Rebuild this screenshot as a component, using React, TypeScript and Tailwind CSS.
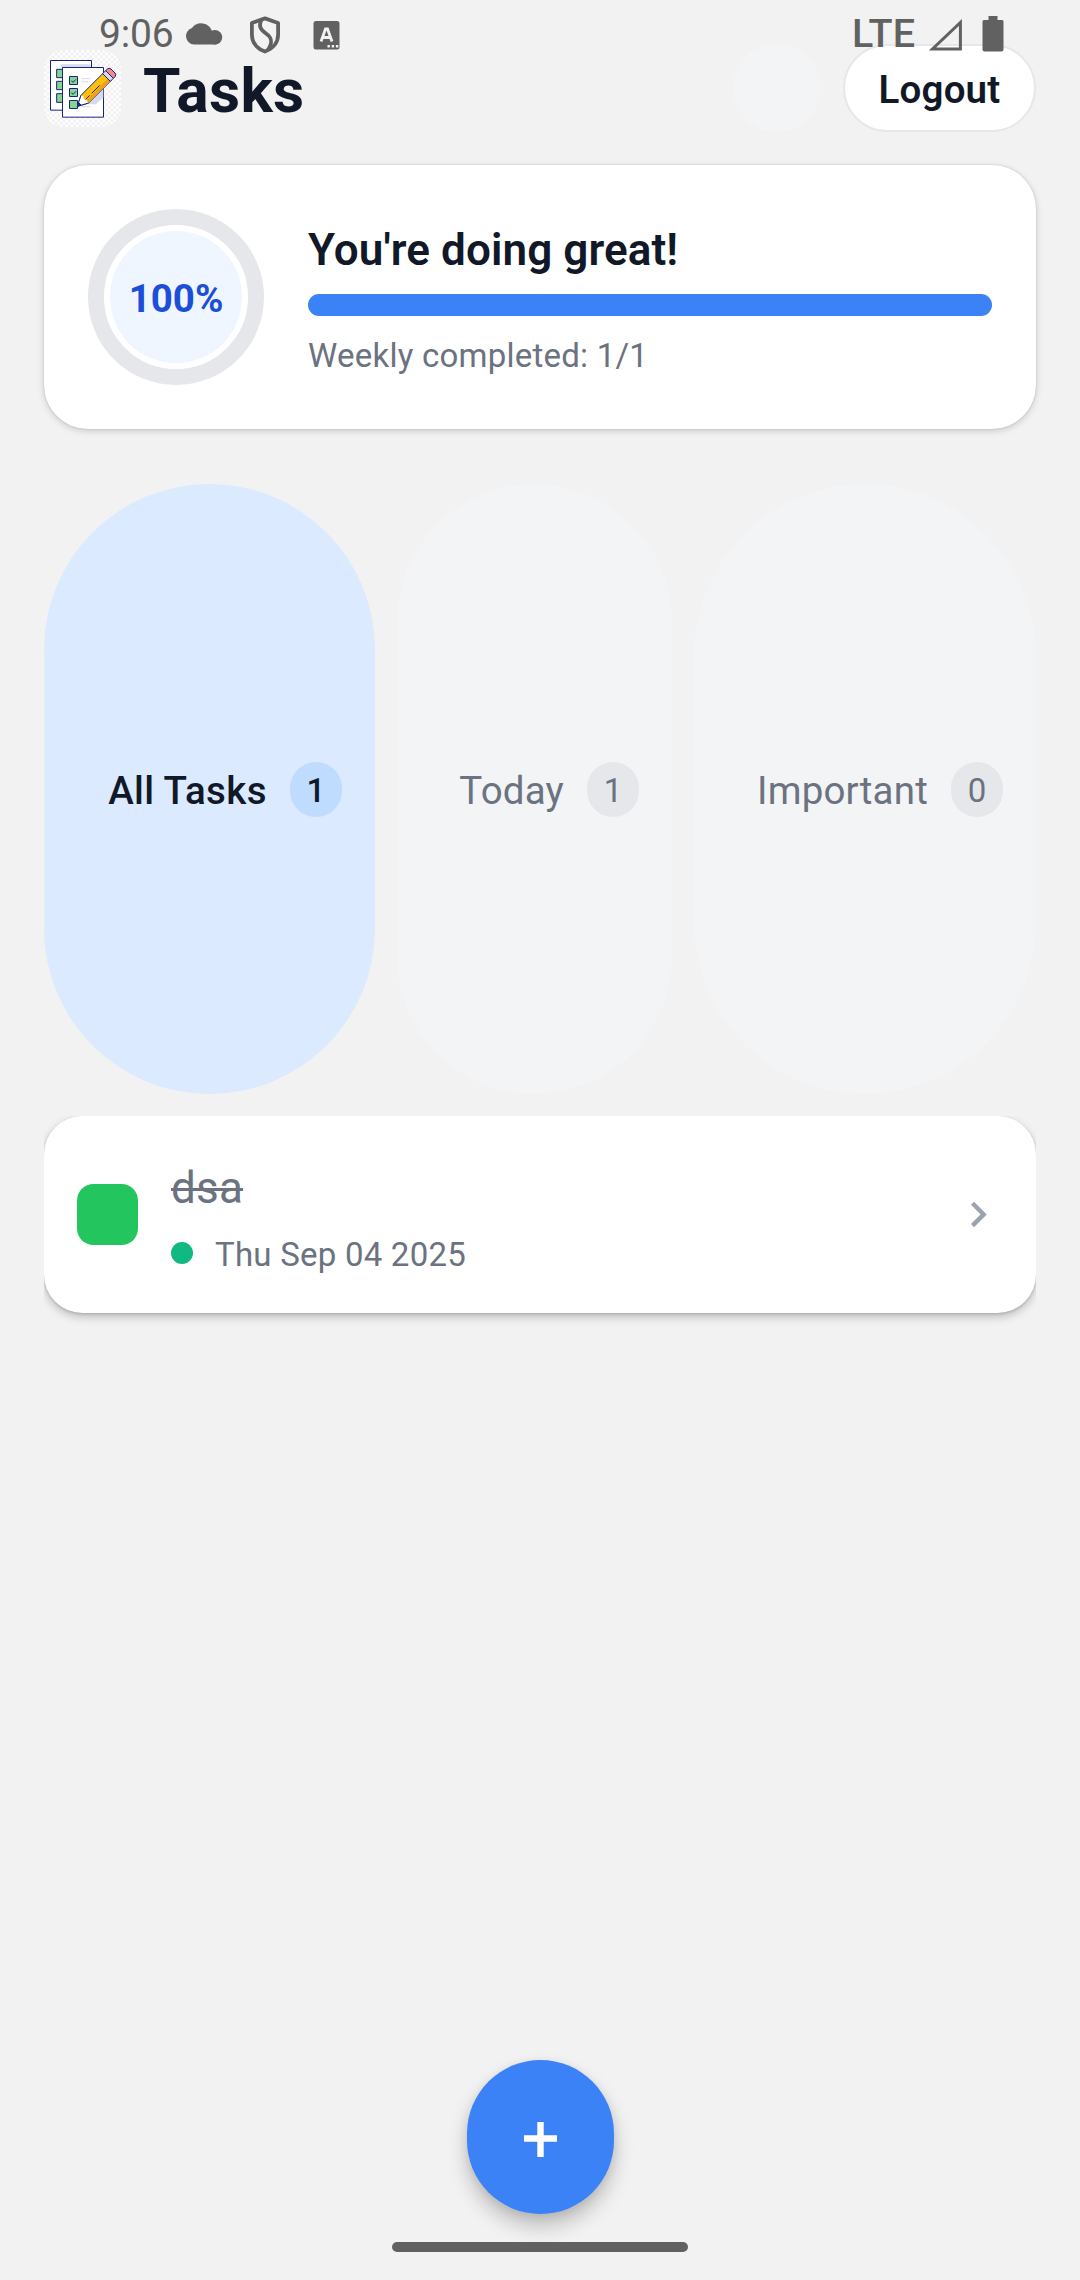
import React from "react";

function StatusBar() {
  return (
    <div className="absolute inset-x-0 top-0 z-20 flex h-[66px] items-center justify-between pr-[76px] pl-[99px] text-[#616161]">
      <div className="flex items-center">
        <span className="w-[86px] pt-[2px] text-[39px] leading-[46px] tracking-[-0.2px]">9:06</span>
        <svg className="mt-[1px] h-[22px] w-[38px]" viewBox="0 0 38 22" fill="currentColor">
          <path d="M9 21.5a8.5 8.5 0 0 1-2-16.6A11.5 11.5 0 0 1 27 8a6.8 6.8 0 0 1 4 13.5z" />
          <circle cx="30" cy="14.3" r="7.2" />
        </svg>
        <svg className="ml-[26px] mt-[4px] h-[38px] w-[32px]" viewBox="0 0 32 38" fill="none" stroke="currentColor" strokeWidth="3.8">
          <path d="M16 2.4 2.9 7v11.5c0 8 5 14.2 13.1 17 8.1-2.8 13.1-9 13.1-17V7z" strokeLinejoin="round" />
          <path d="M12.5 3.5C9.5 10 11 13.5 17 17.5 23 21.5 24 26 19 34" />
        </svg>
        <svg className="ml-[32px] mt-[4px] h-[29px] w-[27px]" viewBox="0 0 27 29">
          <rect width="26" height="28.5" x="0.5" rx="2.5" fill="currentColor" />
          <path d="M8 20.5 12.5 8h2L19 20.5M9.5 16.5h8" fill="none" stroke="#f2f2f2" strokeWidth="2.8" />
          <path d="M14.5 24h2.4v2.4h-2.4zm4.2 0h2.4v2.4h-2.4zm4.2 0h2.4v2.4h-2.4z" fill="#f2f2f2" />
        </svg>
      </div>
      <div className="flex items-center">
        <span className="mr-[13px] pt-[2px] text-[39.5px] font-medium leading-[46px]">LTE</span>
        <svg className="mt-[4px] h-[34px] w-[35px]" viewBox="0 0 35 34" fill="none" stroke="currentColor" strokeWidth="3">
          <path d="M32.4 4.5v26.5H4.5z" />
        </svg>
        <svg className="ml-[19px] mt-[2px] h-[36px] w-[22px]" viewBox="0 0 22 36" fill="currentColor">
          <path d="M6.5 0h9v4H20a1.5 1.5 0 0 1 1.5 1.5v28A2 2 0 0 1 19.5 35.5h-17a2 2 0 0 1-2-2v-28A1.5 1.5 0 0 1 2 4h4.5z" />
        </svg>
      </div>
    </div>
  );
}

function AppIcon() {
  return (
    <svg className="h-[77px] w-[77px] rounded-[20px]" viewBox="12 15 231 231">
      <defs>
        <pattern id="checker" width="16" height="16" x="12" y="15" patternUnits="userSpaceOnUse">
          <rect width="16" height="16" fill="#fff" />
          <path d="M8 0h8v8H8zM0 8h8v8H0z" fill="#f0f0f0" />
        </pattern>
      </defs>
      <rect x="12" y="15" width="231" height="231" fill="url(#checker)" />
      <g stroke="#1a237e" strokeWidth="3">
        <path d="M31.5 46.5h123v149h-123z" fill="#fff" />
        <path d="M62 58h90v10H62z" fill="#d5daee" stroke="none" />
        <path d="M50 73h18v25H50zM50 109h18v25H50zM50 146h18v26H50z" fill="#81d88b" />
        <path d="M67.5 67.5h123v149h-123z" fill="#fff" />
        <path d="M126 175l64-65v48l-24 20z" fill="#d5daee" stroke="none" />
        <path d="M124 101h27M124 110h20M140 176h30M125 185h26" stroke="#d5daee" />
        <path d="M88.5 94.5h24v24h-24zM88.5 130.5h24v24h-24zM88.5 166.5h24v24h-24z" fill="#81d88b" />
        <path d="M94 107l5 5 9-9M94 143l5 5 9-9" fill="none" />
        <path d="M112 184l11-33 68-68 23 23-68 68z" fill="#ffc107" />
        <path d="M137 167l69-69 8 8-68 68z" fill="#eba21c" stroke="none" />
        <path d="M112 184l11-33 7 3 1 9 8 2 7 9z" fill="#fff" stroke="none" />
        <path d="M123 151l-11 33 34-10" fill="none" />
        <path d="M112 184l4-11 7 7z" fill="#1a237e" />
        <path d="M137 163l12-12M155 145l24-24" fill="none" />
        <path d="M188 86l9-9 23 23-9 9z" fill="#d5daee" />
        <path d="M197 77l5-5q5-5 11 0l12 12q5 5 0 11l-5 5z" fill="#f48b83" />
      </g>
    </svg>
  );
}

function Header() {
  return (
    <header className="flex h-[88px] items-center">
      <AppIcon />
      <h1 className="ml-[22px] mt-[8px] text-[60.5px] font-bold leading-[72px] tracking-[0.3px] text-[#111827]">Tasks</h1>
      <div className="ml-auto size-[88px] rounded-full bg-[#f3f4f6]" />
      <button className="ml-[22px] flex h-[88px] w-[193px] items-center justify-center rounded-full border-[2.75px] border-[#e5e7eb] bg-white pt-[3px] text-[38.5px] font-semibold leading-[46px] tracking-[0.2px] text-[#111827]">
        Logout
      </button>
    </header>
  );
}

function ProgressCard() {
  return (
    <section className="mt-[33px] flex h-[264px] items-center rounded-[44px] bg-white px-[44px] shadow-[0_2px_7px_rgba(0,0,0,0.17),0_0_2px_rgba(0,0,0,0.16)]">
      <div className="flex size-[176px] shrink-0 items-center justify-center rounded-full border-[16.5px] border-[#e5e7eb]">
        <div className="flex size-[132px] shrink-0 items-center justify-center rounded-full bg-[#eff6ff] pt-[4px] text-[38.5px] font-bold text-[#1d4ed8]">
          100%
        </div>
      </div>
      <div className="ml-[44px] flex-1 pt-[5px]">
        <h2 className="text-[44px] font-semibold leading-[52px] tracking-[0.1px] text-[#111827]">You're doing great!</h2>
        <div className="mt-[18px] h-[22px] rounded-full bg-[#3b82f6]" />
        <p className="mt-[20px] text-[33px] leading-[39px] tracking-[0.23px] text-[#6b7280]">Weekly completed: 1/1</p>
      </div>
    </section>
  );
}

const tabs = [
  { label: "All Tasks", count: 1, active: true, width: "w-[331px]" },
  { label: "Today", count: 1, active: false, width: "w-[275px]" },
  { label: "Important", count: 0, active: false, width: "w-[342px]" },
];

function Tabs() {
  return (
    <nav className="mt-[55px] flex h-[610px] gap-[22px]">
      {tabs.map((t) => (
        <button
          key={t.label}
          className={`flex shrink-0 items-center justify-end rounded-full pr-[33px] text-[38.5px] ${t.width} ${
            t.active
              ? "bg-[#dbeafe] font-medium tracking-[0.4px] text-[#111827]"
              : "bg-[#f3f4f6] tracking-[0.2px] text-[#6b7280]"
          }`}
        >
          <span className="pt-[3px] leading-[46px]">{t.label}</span>
          <span
            className={`ml-[23px] flex h-[55px] w-[52px] items-center justify-center rounded-full pt-[3px] text-[33px] tracking-normal ${
              t.active ? "bg-[#bfdbfe]" : "bg-[#e5e7eb]"
            }`}
          >
            {t.count}
          </span>
        </button>
      ))}
    </nav>
  );
}

function TaskList() {
  return (
    <ul className="mt-[22px] overflow-hidden pb-[22px]">
      <li className="flex h-[197px] items-center rounded-[38.5px] bg-white px-[33px] shadow-[0_4px_10px_rgba(0,0,0,0.22),0_1px_3px_rgba(0,0,0,0.15)]">
        <div className="size-[61px] rounded-[16.5px] bg-[#22c55e]" />
        <div className="ml-[33px] flex-1 pt-[6px]">
          <div className="text-[44px] leading-[52px] tracking-[0.2px] text-[#6b7280] line-through decoration-[3px]">dsa</div>
          <div className="mt-[17px] flex items-center">
            <span className="mt-[2px] size-[22px] rounded-full bg-[#10b981]" />
            <span className="ml-[22px] pt-[4px] text-[33px] leading-[39px] tracking-[0.23px] text-[#6b7280]">Thu Sep 04 2025</span>
          </div>
        </div>
        <svg className="mr-[16px] h-[27px] w-[16px]" viewBox="0 0 16 27" fill="none" stroke="#9ca3af" strokeWidth="4.4">
          <path d="M1.5 2.2 12.7 13.4 1.5 24.6" />
        </svg>
      </li>
    </ul>
  );
}

export default function App() {
  return (
    <div className="relative flex h-[2280px] w-[1080px] flex-col overflow-hidden bg-[#f2f2f2] px-[44px] pt-[44px] font-['Roboto',sans-serif]">
      <StatusBar />
      <Header />
      <ProgressCard />
      <Tabs />
      <TaskList />
      <div className="mt-auto flex flex-col items-center pb-[28px]">
        <button
          aria-label="Add task"
          className="ml-[1px] flex h-[154px] w-[147px] items-center justify-center rounded-[77px] bg-[#3b82f6] shadow-[0_12px_20px_rgba(0,0,0,0.22),0_2px_10px_rgba(0,0,0,0.08)]"
        >
          <svg className="mt-[4px] h-[35px] w-[33px]" viewBox="0 0 33 35" stroke="#fff" strokeWidth="6.4">
            <path d="M16.5 0v35M0 16.5h33" />
          </svg>
        </button>
        <div className="relative mt-[28px] h-[10px] w-[296px] rounded-full bg-[#616161]" />
      </div>
    </div>
  );
}
